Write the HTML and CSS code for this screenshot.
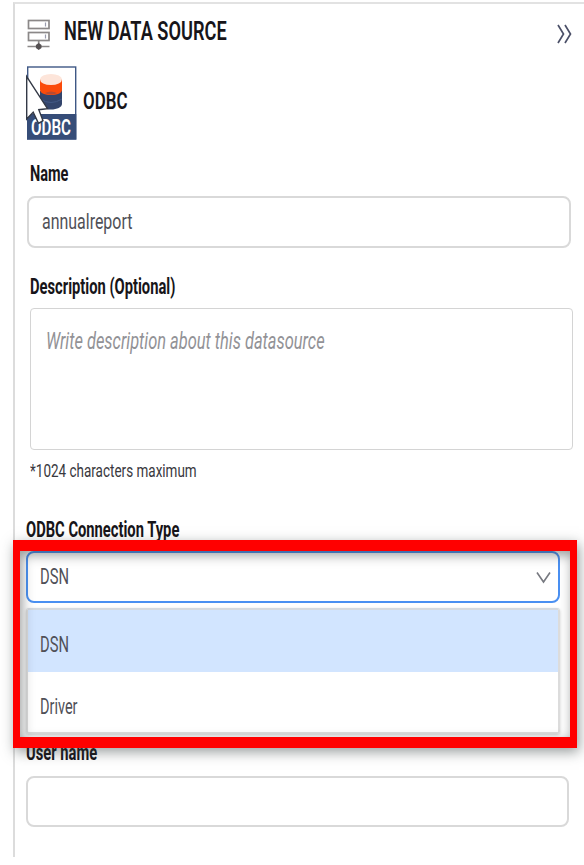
FILE: index.html
```html
<!DOCTYPE html>
<html lang="en">
<head>
<meta charset="utf-8">
<title>New Data Source</title>
<link rel="stylesheet" href="styles.css">
</head>
<body>
<main class="panel">
  <header class="header">
    <svg class="server-icon" width="24" height="32" viewBox="0 0 24 32" fill="none">
      <g stroke="#8b8888" stroke-width="1.7">
        <rect x="1.5" y="1.5" width="20.5" height="8"/>
        <rect x="1.5" y="13.5" width="20.5" height="8"/>
        <path d="M11.7 22v4M.5 27.5h22" />
      </g>
      <path d="M18.5 3.5v4M18.5 15.5v4" stroke="#9a9cae" stroke-width="1.2"/>
      <path d="M11.7 24l2.8 2v3l-2.8 2-2.8-2v-3z" fill="#555052"/>
    </svg>
    <h1 class="text title">NEW DATA SOURCE</h1>
    <svg class="collapse" width="18" height="22" viewBox="0 0 18 22" fill="none" stroke="#4b5068" stroke-width="1.7"><path d="M2 2 7.500 11 2 20M9 2 14.500 11 9 20"/></svg>
  </header>

  <section class="source">
    <svg class="logo" width="52" height="75" viewBox="0 0 52 75">
      <rect x="1.7" y="1" width="48" height="72" fill="#fff" stroke="#3f5885" stroke-width="1.4"/>
      <rect x="1" y="48" width="49.3" height="25.5" fill="#364d78"/>
      <path d="M14 25v13c0 3 5 5.500 11 5.500s11-2.500 11-5.500V24z" fill="#33456c"/>
      <path d="M14 13v11c0 3 5 5 11 5s11-2 11-5V13z" fill="#fb4b0b"/>
      <path d="M19 27q6-3 12 0-6 3-12 0z" fill="#b74b32"/>
      <path d="M14 33q11 7 22 0" stroke="#425986" stroke-width="1" fill="none"/>
      <ellipse cx="25" cy="13.500" rx="11" ry="5.500" fill="#fde5da"/>
      <text class="logo-text" x="5" y="69" textLength="40" lengthAdjust="spacingAndGlyphs">ODBC</text>
      <path d="M.7 10.500v42.500l6.500-6.800 5.300 11.200 4.500-2.700-4.200-11 8.700-1z" fill="#fff" stroke="#333946" stroke-width="1.4"/>
    </svg>
    <h2 class="text source-name">ODBC</h2>
  </section>

  <form class="form">
    <div class="field name-field">
      <label class="text label name-label">Name</label>
      <div class="control"><span class="text value name-value">annualreport</span></div>
    </div>
    <div class="field description-field">
      <label class="text label description-label">Description (Optional)</label>
      <div class="area"><span class="text placeholder">Write description about this datasource</span></div>
      <span class="text note">*1024 characters maximum</span>
    </div>
    <div class="field type-field">
      <label class="text label type-label">ODBC Connection Type</label>
      <div class="control select">
        <span class="text value dsn">DSN</span>
        <svg class="arrow" width="16" height="14" viewBox="0 0 16 14" fill="none" stroke="#777980" stroke-width="1.6"><path d="M2 2.500 8.500 12l6.500-9.500"/></svg>
      </div>
      <div class="options">
        <div class="option selected"><span class="text value dsn">DSN</span></div>
        <div class="option"><span class="text value driver">Driver</span></div>
      </div>
      <div class="highlight"></div>
    </div>
    <div class="field user-field">
      <label class="text label user-label">User name</label>
      <div class="control"></div>
    </div>
  </form>
</main>
</body>
</html>
```

FILE: styles.css
```css
* { box-sizing: border-box; }
body { margin: 0; background: #fff; color: #171519; font-family: Roboto, "Liberation Sans", sans-serif; overflow: hidden; }
.panel { margin: 2px 0 0 13px; height: 855px; border-top: 2px solid #e2e2e2; border-left: 2px solid #dcdcdc; }
.text { display: block; width: max-content; margin: 0; font-size: 22px; line-height: 28px; font-weight: 400; white-space: nowrap; transform-origin: 0 50%; }
.header { display: flex; height: 61px; padding: 14px 10px 0 12px; }
.server-icon { flex: none; margin-top: 1px; }
.title { font-size: 25px; font-weight: 600; margin-left: 13px; margin-right: auto; transform: scaleX(.728); }
.collapse { flex: none; margin-top: 5px; }
.source { display: flex; padding-left: 11px; height: 95px; }
.logo { flex: none; margin-top: 1px; }
.logo-text { font: 600 22px Roboto, sans-serif; fill: #fff; }
.source-name { font-size: 23px; font-weight: 600; margin: 23px 0 0 5px; transform: scaleX(.735); }
.field { position: relative; }
.label { font-weight: 700; font-size: 22px; }
.control { width: 544px; height: 52px; border: 2px solid #d9d9d9; border-radius: 8px; display: flex; align-items: center; background: #fff; }
.name-field { padding-left: 12px; height: 113px; }
.name-label { margin: 0 0 8px 3px; transform: scaleX(.66); }
.value { color: #505057; }
.name-value { margin-left: 13px; transform: scaleX(.725); }
.description-field { padding-left: 15px; height: 243px; }
.description-label { margin-bottom: 7px; transform: scaleX(.669); }
.area { width: 543px; height: 142px; border: 1.500px solid #d4d4d4; border-radius: 4px; padding: 19px 15px; }
.placeholder { font-size: 23px; font-style: italic; color: #929296; transform: scaleX(.714); }
.note { margin-top: 7px; font-size: 19px; color: #39393e; transform: scaleX(.71); }
.type-field { padding-left: 11px; height: 223px; }
.type-label { transform: scaleX(.669); }
.select { width: 534px; margin-top: 7px; border-color: #4a90f2; padding: 0 7px 0 12px; justify-content: space-between; }
.options { width: 534px; height: 126px; margin-top: 5px; border: 2px solid #ddd; border-top-color: #d5dae0; border-radius: 3px; box-shadow: 0 1px 3px #ccc; }
.option { height: 62px; display: flex; align-items: center; padding-left: 12px; padding-top: 8px; }
.selected { background: #d2e5ff; }
.dsn { transform: scaleX(.67); }
.driver { transform: scaleX(.66); }
.highlight { position: absolute; left: -2px; top: 24px; width: 564px; height: 208px; border: solid red; border-width: 11px 7px; box-shadow: 2px 4px 12px rgba(50,60,60,.5), inset 2px 4px 12px rgba(50,55,55,.5); z-index: 2; pointer-events: none; }
.user-field { padding-left: 11px; }
.user-label { margin-bottom: 9px; transform: scaleX(.67); }
.user-field .control { width: 543px; height: 51px; }
```
